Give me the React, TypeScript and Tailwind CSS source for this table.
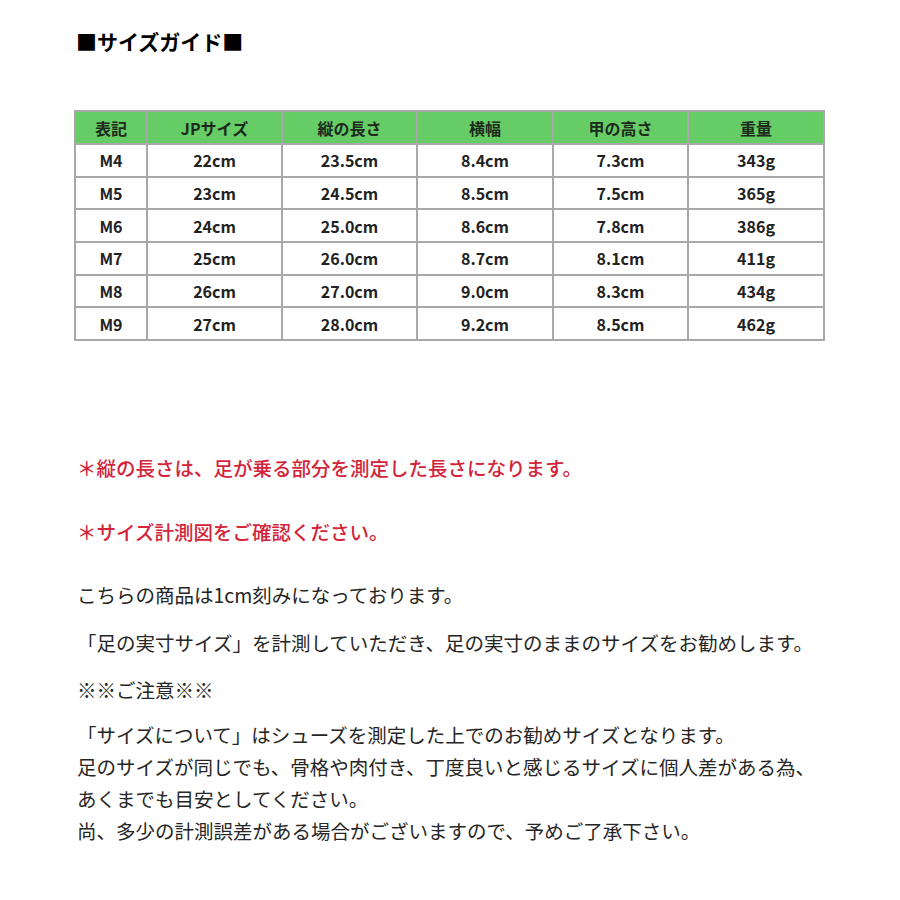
const rows = [
  ["M4", "22cm", "23.5cm", "8.4cm", "7.3cm", "343g"],
  ["M5", "23cm", "24.5cm", "8.5cm", "7.5cm", "365g"],
  ["M6", "24cm", "25.0cm", "8.6cm", "7.8cm", "386g"],
  ["M7", "25cm", "26.0cm", "8.7cm", "8.1cm", "411g"],
  ["M8", "26cm", "27.0cm", "9.0cm", "8.3cm", "434g"],
  ["M9", "27cm", "28.0cm", "9.2cm", "8.5cm", "462g"],
];

const headers = ["表記", "JPサイズ", "縦の長さ", "横幅", "甲の高さ", "重量"];
const widths = ["w-[72px]", "w-[135px]", "w-[135px]", "w-[136px]", "w-[135px]", "w-[136px]"];

export default function App() {
  return (
    <div
      className="w-[900px] h-[900px] bg-white pt-[25px] text-[#262626]"
      style={{ fontFamily: '"Noto Sans CJK JP", "Noto Sans", sans-serif' }}
    >
      {/* Title */}
      <h1 className="pl-[76px] text-[21px] leading-[32px] font-bold text-black">■サイズガイド■</h1>

      {/* Size table */}
      <table className="ml-[74px] mt-[53px] border-collapse table-fixed w-[749px] text-[16px] font-bold text-[#222]">
        <thead>
          <tr className="bg-[#66cc66] h-[33px]">
            {headers.map((h, i) => (
              <th key={h} className={`${widths[i]} border-2 border-[#a8a8a8] font-bold text-[#1c2a1c] text-center`}>
                {h}
              </th>
            ))}
          </tr>
        </thead>
        <tbody>
          {rows.map((r) => (
            <tr key={r[0]} className="h-[32.7px]">
              {r.map((c, i) => (
                <td key={i} className="border-2 border-[#a8a8a8] text-center">
                  {c}
                </td>
              ))}
            </tr>
          ))}
        </tbody>
      </table>

      {/* Notes */}
      <div className="pl-[77px] text-[19.5px] leading-[32px]">
        <p className="mt-[111px] text-[#d3243a] font-medium">＊縦の長さは、足が乗る部分を測定した長さになります。</p>
        <p className="mt-[32px] text-[#d3243a] font-medium">＊サイズ計測図をご確認ください。</p>
        <p className="mt-[31px]">こちらの商品は1cm刻みになっております。</p>
        <p className="mt-[16px]">「足の実寸サイズ」を計測していただき、足の実寸のままのサイズをお勧めします。</p>
        <p className="mt-[15px]">※※ご注意※※</p>
        <p className="mt-[13px]">
          「サイズについて」はシューズを測定した上でのお勧めサイズとなります。
          <br />
          足のサイズが同じでも、骨格や肉付き、丁度良いと感じるサイズに個人差がある為、
          <br />
          あくまでも目安としてください。
          <br />
          尚、多少の計測誤差がある場合がございますので、予めご了承下さい。
        </p>
      </div>
    </div>
  );
}
